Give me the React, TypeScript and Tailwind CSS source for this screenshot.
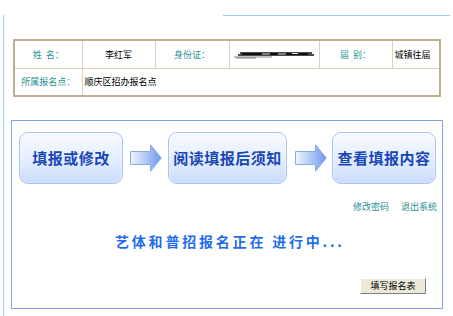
import React from 'react';

const font = "font-['SimSun','Noto_Sans_CJK_SC',sans-serif]";

const Arrow: React.FC = () => (
  <svg width="32" height="28" viewBox="0 0 32 28" className="shrink-0">
    <defs>
      <linearGradient id="ag" x1="0" x2="1" y1="0" y2="0">
        <stop offset="0" stopColor="#f2f6ff" />
        <stop offset="1" stopColor="#6f98ea" />
      </linearGradient>
    </defs>
    <path
      d="M0.5 7.5 H20.5 V0.8 L31.3 14 L20.5 27.2 V20.5 H0.5 Z"
      fill="url(#ag)"
      stroke="#86a8ec"
      strokeWidth="1"
    />
  </svg>
);

const Step: React.FC<{ label: string; w: string }> = ({ label, w }) => (
  <div
    className={`${w} h-[52px] shrink-0 rounded-[9px] border border-[#a9c3f2] bg-gradient-to-b from-[#f7faff] via-[#e6efff] to-[#c9dbfb] flex items-center justify-center shadow-[inset_0_0_2px_#ffffff]`}
  >
    <span className="text-[15px] font-bold text-[#1a47b6] tracking-[0.5px] font-['Noto_Sans_CJK_SC',serif]">
      {label}
    </span>
  </div>
);

export default function App() {
  return (
    <div className={`w-[453px] h-[316px] bg-white overflow-hidden pt-[15px] pl-[3px] ${font}`}>
      <div className="h-[301px] border-l border-[#a9cff8]">
        <div className="h-px ml-[219px] mr-[3px] bg-[#9ccaf9]" />

        {/* student info */}
        <table className="ml-[9px] mt-[23px] w-[428px] border-collapse border-2 border-[#bfb08c] text-[9px] table-fixed">
          <colgroup>
            <col className="w-[68px]" />
            <col className="w-[73px]" />
            <col className="w-[74px]" />
            <col className="w-[90px]" />
            <col className="w-[73px]" />
            <col />
          </colgroup>
          <tbody>
            <tr className="h-[28px]">
              <td className="border border-[#ddd3bb] text-center text-[#2a8f8f]">姓&nbsp;&nbsp;名：</td>
              <td className="border border-[#ddd3bb] text-center text-black">李红军</td>
              <td className="border border-[#ddd3bb] text-center text-[#2a8f8f]">身份证：</td>
              <td className="border border-[#ddd3bb] px-[2px]">
                <svg width="84" height="12" viewBox="0 0 84 12">
                  <path d="M8 5 H80 M6 7 H82 M10 6 H76" stroke="#111" strokeWidth="1.6" />
                  <path d="M30 6 H38 M46 6 H54 M60 5.5 H66" stroke="#fff" strokeWidth="0.9" />
                  <path d="M2 9 H40 M4 10 H24" stroke="#666" strokeWidth="0.8" />
                </svg>
              </td>
              <td className="border border-[#ddd3bb] text-center text-[#2a8f8f]">届&nbsp;&nbsp;别：</td>
              <td className="border border-[#ddd3bb] pl-[2px] text-black">城镇往届</td>
            </tr>
            <tr className="h-[28px]">
              <td className="border border-[#ddd3bb] text-center text-[#2a8f8f]">所属报名点：</td>
              <td colSpan={5} className="border border-[#ddd3bb] pl-[2px] text-black">
                顺庆区招办报名点
              </td>
            </tr>
          </tbody>
        </table>

        {/* main panel */}
        <div className="ml-[7px] mt-[23px] w-[432px] h-[189px] border border-[#80a6ec] pt-[11px] px-[7px] flex flex-col">
          <div className="flex items-center">
            <Step label="填报或修改" w="w-[104px]" />
            <div className="ml-[7px] mr-[6px] flex items-center">
              <Arrow />
            </div>
            <Step label="阅读填报后须知" w="w-[119px]" />
            <div className="ml-[8px] mr-[5px] flex items-center">
              <Arrow />
            </div>
            <Step label="查看填报内容" w="w-[104px]" />
          </div>

          <div className="mt-[16px] -mr-[2px] flex justify-end gap-[12px] text-[9px] text-[#2a8f8f]">
            <span>修改密码</span>
            <span>退出系统</span>
          </div>

          <div className="mt-[20px] pl-[96px] text-[14px] font-bold text-[#1f6cf0] tracking-[2.8px] font-['Noto_Sans_CJK_SC',sans-serif] leading-none">
            艺体和普招报名正在 进行中...
          </div>

          <div className="mt-[30px] flex justify-end pr-[9px]">
            <button className="w-[66px] h-[16px] bg-[#ece9d8] border border-t-white border-l-white border-r-[#808080] border-b-[#808080] text-[9px] text-black leading-none">
              填写报名表
            </button>
          </div>
        </div>
      </div>
    </div>
  );
}
